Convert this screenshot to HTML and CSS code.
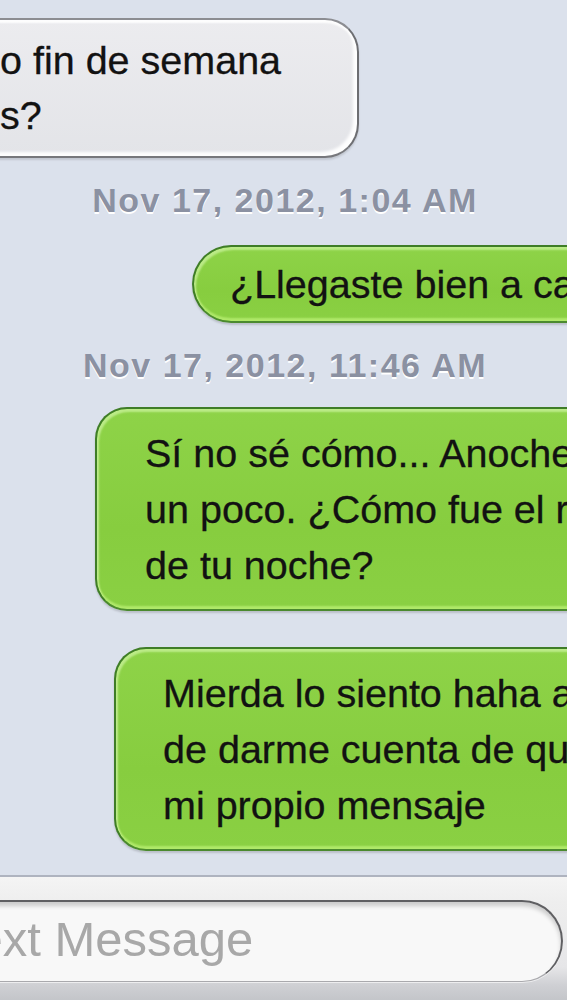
FILE: index.html
```html
<!DOCTYPE html>
<html lang="es">
<head>
<meta charset="utf-8">
<title>Mensajes</title>
<link rel="stylesheet" href="styles.css">
</head>
<body>
<div class="screen">
  <div class="thread">
    <div class="bubble bubble--in">o fin de semana<br>s?</div>
    <div class="stamp">Nov 17, 2012, 1:04 AM</div>
    <div class="bubble bubble--out bubble--pill out-1">¿Llegaste bien a casa?</div>
    <div class="stamp">Nov 17, 2012, 11:46 AM</div>
    <div class="bubble bubble--out out-2">Sí no sé cómo... Anoche bebí<br>un poco. ¿Cómo fue el resto<br>de tu noche?</div>
    <div class="bubble bubble--out out-3">Mierda lo siento haha acabo<br>de darme cuenta de que respondí<br>mi propio mensaje</div>
  </div>
  <div class="composer">
    <div class="field">Text Message</div>
  </div>
</div>
</body>
</html>
```
FILE: styles.css
```css
html, body {
  margin: 0;
  padding: 0;
  overflow: hidden;
  width: 567px;
  height: 1000px;
}
body {
  background: #dbe1ec;
  font-family: "Liberation Sans", Arial, Helvetica, sans-serif;
}
.screen {
  display: flex;
  flex-direction: column;
  height: 1000px;
  width: 567px;
  overflow: hidden;
}
.thread {
  flex: 1;
  display: flex;
  flex-direction: column;
  align-items: flex-start;
  padding-top: 18px;
  background: #dbe1ec;
}
.bubble {
  font-size: 39.5px;
  white-space: nowrap;
  color: #121212;
  -webkit-text-stroke: 0.3px #121212;
}
.bubble--in {
  margin-left: -42px;
  padding: 13px 76px 13px 40px;
  line-height: 55px;
  background: linear-gradient(#ececef, #e3e4e8);
  border: 2px solid #8c8d92;
  border-right-color: #6d6e72;
  border-bottom-color: #77787c;
  border-radius: 34px;
  box-shadow: inset -4px -4px 3px rgba(255,255,255,0.95), inset 0 3px 2px rgba(255,255,255,0.9), 0 2px 2px rgba(0,0,0,0.12);
}
.stamp {
  align-self: stretch;
  text-align: center;
  padding-left: 3px;
  margin-top: 22px;
  font-size: 34px;
  line-height: 40px;
  font-weight: bold;
  letter-spacing: 1.5px;
  color: #8b91a2;
  text-shadow: 0 2px 0 #ffffff;
}
.bubble--out {
  background: linear-gradient(#8ed348, #87cd3f 60%, #8ad043);
  border: 2px solid #3f7d27;
  border-bottom-color: #4b8a2f;
  line-height: 56px;
  border-radius: 32px;
  box-shadow: inset 2px 3px 2px rgba(225,255,190,0.55), inset 0 -3px 2px rgba(180,235,110,0.9), 0 2px 2px rgba(0,0,0,0.15);
}
.bubble--pill {
  line-height: 55px;
  border-radius: 40px;
  padding: 9.5px 40px 9.5px 36px;
}
.out-1 {
  margin-top: 25px;
  margin-left: 192px;
}
.out-2 {
  margin-top: 22px;
  margin-left: 95px;
  padding: 16px 40px 16px 48px;
}
.out-3 {
  margin-top: 36px;
  margin-left: 114px;
  padding: 16px 40px 16px 47px;
}
.composer {
  border-top: 2px solid #aeb3bf;
  display: flex;
  align-items: flex-start;
  padding-top: 23px;
  box-sizing: border-box;
  height: 125px;
  background: linear-gradient(#f4f4f4 0px, #eeeeee 25px, #e6e6e8 90px, #cfd0d4 108px, #c2c4c8 125px);
}
.field {
  flex: 1;
  margin-left: -70px;
  margin-right: 4px;
  padding-left: 19px;
  box-sizing: border-box;
  height: 82px;
  font-size: 49px;
  line-height: 74px;
  padding-bottom: 4px;
  color: #a8a8a8;
  background: #f8f8f8;
  border: 2px solid #5f5f62;
  border-bottom: 1px solid #a9a9ad;
  border-radius: 0 42px 42px 0;
  box-shadow: inset 0 4px 4px rgba(0,0,0,0.18), 0 1px 0 rgba(255,255,255,0.6);
  white-space: nowrap;
}
```
